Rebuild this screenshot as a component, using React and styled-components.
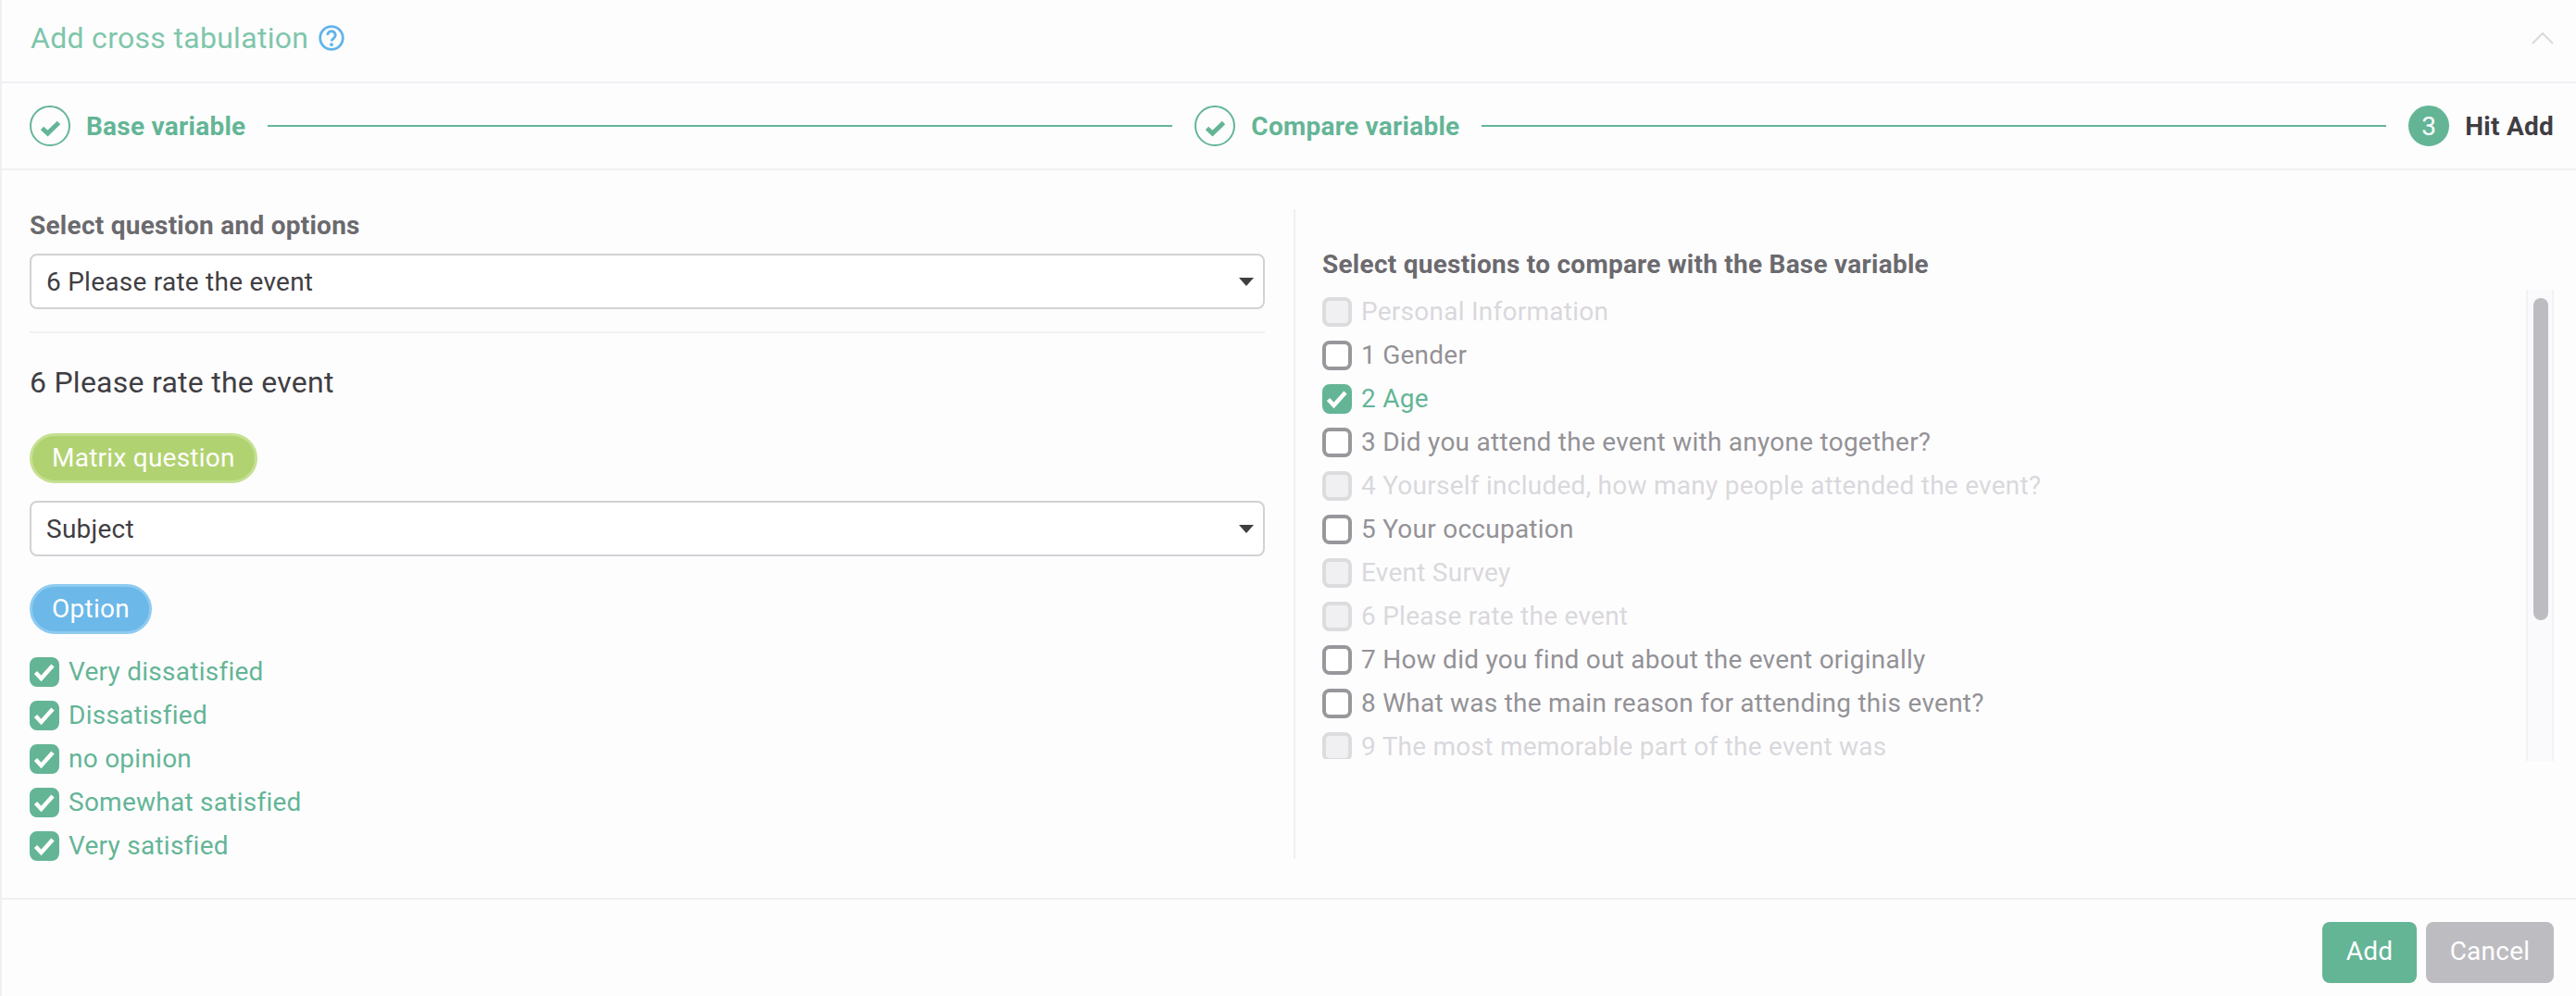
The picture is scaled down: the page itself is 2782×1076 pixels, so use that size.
import React from 'react'
import styled, { createGlobalStyle } from 'styled-components'

const GREEN = '#64b596'

const Global = createGlobalStyle`
  html, body { margin: 0; padding: 0; background: #fefdfe; }
  body { font-family: Roboto, "Liberation Sans", sans-serif; letter-spacing: 0.25px; }
  * { box-sizing: border-box; }
`

const Panel = styled.div`
  width: 2782px;
  height: 1076px;
  display: flex;
  flex-direction: column;
  border-left: 2px solid #f0eff2;
  background: #fefdfe;
  overflow: hidden;
`

const Header = styled.div`
  height: 90px;
  flex: none;
  display: flex;
  align-items: center;
  padding: 0 24px 7px 31px;
  border-bottom: 2px solid #f0eff2;
`

const Title = styled.h2`
  margin: 0;
  font-size: 32px;
  font-weight: 400;
  color: #7fc6ab;
  letter-spacing: 0.3px;
`

const Help = styled.svg`
  width: 28px;
  height: 28px;
  margin-left: 11px;
  flex: none;
`

const Chevron = styled.svg`
  width: 24px;
  height: 14px;
  margin-left: auto;
`

const Stepper = styled.div`
  height: 94px;
  flex: none;
  display: flex;
  align-items: center;
  padding: 0 24px 0 30px;
  border-bottom: 2px solid #f0eff2;
`

const StepCircle = styled.span`
  width: 44px;
  height: 44px;
  flex: none;
  border-radius: 50%;
  display: flex;
  align-items: center;
  justify-content: center;
  border: 2px solid ${GREEN};
  background: ${p => (p.$filled ? GREEN : 'transparent')};
  color: #fff;
  font-size: 28px;
`

const StepLabel = styled.span`
  margin-left: 17px;
  font-size: 28px;
  font-weight: 700;
  color: ${p => (p.$active ? '#403e43' : GREEN)};
`

const StepLine = styled.span`
  flex: 1;
  height: 2px;
  margin: 0 24px;
  background: ${GREEN};
`

const Body = styled.div`
  flex: 1;
  min-height: 0;
  display: grid;
  grid-template-columns: 1395px 1fr;
  grid-template-rows: 702px;
  padding: 42px 24px 0 0;
`

const LeftCol = styled.div`
  padding: 0 31px 0 30px;
`

const RightCol = styled.div`
  border-left: 2px solid #f0eff2;
  padding: 42px 0 0 29px;
`

const Label = styled.div`
  font-size: 28px;
  font-weight: 700;
  line-height: 36px;
  color: #6b6a6e;
`

const SelectBox = styled.div`
  height: 60px;
  display: flex;
  align-items: center;
  justify-content: space-between;
  padding: 0 10px 0 16px;
  border: 2px solid #d2d1d4;
  border-radius: 8px;
  background: #fff;
  font-size: 28px;
  color: #403e43;
  margin-top: ${p => p.$top || 0}px;
`

const Arrow = styled.span`
  width: 0;
  height: 0;
  border-left: 8px solid transparent;
  border-right: 8px solid transparent;
  border-top: 9px solid #403e43;
`

const Divider = styled.div`
  height: 2px;
  margin-top: 24px;
  background: #f0eff2;
`

const Question = styled.div`
  margin-top: 35px;
  font-size: 32px;
  line-height: 36px;
  color: #403e43;
`

const Pill = styled.div`
  display: inline-flex;
  align-items: center;
  height: 54px;
  padding: 0 21px 2px;
  border-radius: 27px;
  border: 3px solid ${p => p.$edge};
  background: ${p => p.$color};
  color: #fff;
  font-size: 28px;
`

const PillRow = styled.div`
  margin-top: ${p => p.$top}px;
  display: flex;
`

const OptionList = styled.div`
  margin-top: 25px;
  display: flex;
  flex-direction: column;
  gap: 15px;
`

const Item = styled.div`
  height: 32px;
  flex: none;
  display: flex;
  align-items: center;
  font-size: 28px;
  line-height: 32px;
  white-space: nowrap;
  color: ${p => (p.$checked ? GREEN : p.$disabled ? '#d9d8dc' : '#939296')};
`

const Box = styled.span`
  width: 32px;
  height: 32px;
  flex: none;
  margin-right: 10px;
  border-radius: 8px;
  display: flex;
  align-items: center;
  justify-content: center;
  border: 4px solid ${p => (p.$checked ? GREEN : p.$disabled ? '#dcdbde' : '#98979b')};
  background: ${p => (p.$checked ? GREEN : p.$disabled ? '#f0eff2' : '#fff')};
`

const ListWrap = styled.div`
  position: relative;
  margin-top: 9px;
  height: 509px;
`

const Scroll = styled.div`
  height: 507px;
  overflow: hidden;
  padding-top: 8px;
  display: flex;
  flex-direction: column;
  gap: 15px;
`

const Track = styled.div`
  position: absolute;
  top: 0;
  right: 0;
  bottom: 0;
  width: 30px;
  padding: 9px 4px 0 6px;
  background: #faf9fb;
  border-left: 2px solid #f2f1f4;
  border-right: 2px solid #f2f1f4;
`

const Thumb = styled.div`
  width: 16px;
  height: 348px;
  border-radius: 8px;
  background: #bdbcc0;
`

const Footer = styled.div`
  height: 106px;
  flex: none;
  display: flex;
  justify-content: flex-end;
  gap: 10px;
  padding: 24px 24px 0 0;
  border-top: 2px solid #f0eff2;
`

const Button = styled.button`
  width: ${p => p.$w}px;
  height: 66px;
  padding: 0 0 3px;
  border: none;
  border-radius: 8px;
  background: ${p => p.$color};
  color: #fff;
  font-family: inherit;
  font-size: 28px;
  letter-spacing: 0.25px;
`

const Tick = () => (
  <svg width="24" height="24" viewBox="0 0 24 24" fill="none">
    <path d="M2.5 12.5l6 6.5L21 5" stroke="#fff" strokeWidth="4.5" />
  </svg>
)

const StepCheck = () => (
  <svg width="30" height="26" viewBox="0 0 30 26" fill="none">
    <path d="M6.5 15.5l6 5.5 12-11.5" stroke={GREEN} strokeWidth="5" />
  </svg>
)

const options = ['Very dissatisfied', 'Dissatisfied', 'no opinion', 'Somewhat satisfied', 'Very satisfied']

const questions = [
  { text: 'Personal Information', disabled: true },
  { text: '1 Gender' },
  { text: '2 Age', checked: true },
  { text: '3 Did you attend the event with anyone together?' },
  { text: '4 Yourself included, how many people attended the event?', disabled: true },
  { text: '5 Your occupation' },
  { text: 'Event Survey', disabled: true },
  { text: '6 Please rate the event', disabled: true },
  { text: '7 How did you find out about the event originally' },
  { text: '8 What was the main reason for attending this event?' },
  { text: '9 The most memorable part of the event was', disabled: true },
]

function Check({ checked, disabled, children }) {
  return (
    <Item $checked={checked} $disabled={disabled}>
      <Box $checked={checked} $disabled={disabled}>{checked && <Tick />}</Box>
      {children}
    </Item>
  )
}

export default function App() {
  return (
    <Panel>
      <Global />
      <Header>
        <Title>Add cross tabulation</Title>
        <Help viewBox="0 0 28 28" fill="none">
          <circle cx="14" cy="14" r="12.3" stroke="#62b4ea" strokeWidth="2.8" />
          <path d="M9.8 11a4.2 4.2 0 1 1 6.5 3.4c-1.5 1-2.3 1.6-2.3 3.2" stroke="#62b4ea" strokeWidth="3" />
          <circle cx="14" cy="21.2" r="1.9" fill="#62b4ea" />
        </Help>
        <Chevron viewBox="0 0 24 14" fill="none">
          <path d="M1 13L12 2l11 11" stroke="#d9d8dc" strokeWidth="2" />
        </Chevron>
      </Header>
      <Stepper>
        <StepCircle><StepCheck /></StepCircle>
        <StepLabel>Base variable</StepLabel>
        <StepLine />
        <StepCircle><StepCheck /></StepCircle>
        <StepLabel>Compare variable</StepLabel>
        <StepLine />
        <StepCircle $filled>3</StepCircle>
        <StepLabel $active>Hit Add</StepLabel>
      </Stepper>
      <Body>
        <LeftCol>
          <Label>Select question and options</Label>
          <SelectBox $top={12}>6 Please rate the event<Arrow /></SelectBox>
          <Divider />
          <Question>6 Please rate the event</Question>
          <PillRow $top={37}>
            <Pill $color="#b1d271" $edge="#c6e092">Matrix question</Pill>
          </PillRow>
          <SelectBox $top={19}>Subject<Arrow /></SelectBox>
          <PillRow $top={30}>
            <Pill $color="#6cb8e8" $edge="#8ecbf0">Option</Pill>
          </PillRow>
          <OptionList>
            {options.map(o => <Check key={o} checked>{o}</Check>)}
          </OptionList>
        </LeftCol>
        <RightCol>
          <Label>Select questions to compare with the Base variable</Label>
          <ListWrap>
            <Scroll>
              {questions.map(q => (
                <Check key={q.text} checked={q.checked} disabled={q.disabled}>{q.text}</Check>
              ))}
            </Scroll>
            <Track><Thumb /></Track>
          </ListWrap>
        </RightCol>
      </Body>
      <Footer>
        <Button $w={102} $color={GREEN}>Add</Button>
        <Button $w={138} $color="#bdbcc0">Cancel</Button>
      </Footer>
    </Panel>
  )
}
